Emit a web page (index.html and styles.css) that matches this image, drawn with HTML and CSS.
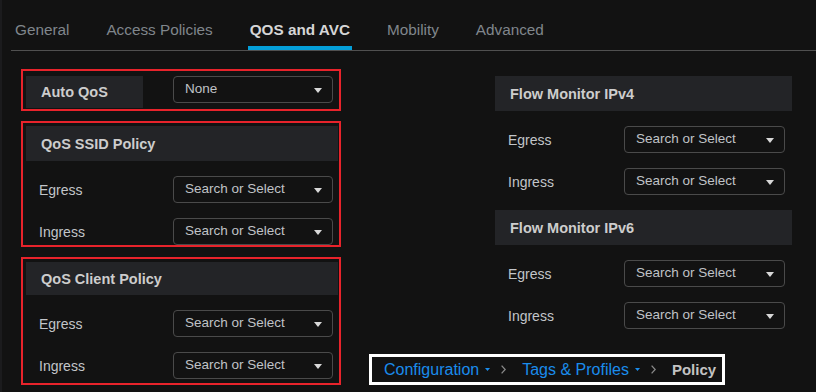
FILE: index.html
```html
<!DOCTYPE html>
<html lang="en">
<head>
  <meta charset="UTF-8">
  <title>Policy Profile - QOS and AVC</title>
  <link rel="stylesheet" href="styles.css">
</head>
<body>

  <div class="page">
    <nav class="tabs">
      <a class="tab">General</a>
      <a class="tab">Access Policies</a>
      <a class="tab active">QOS and AVC</a>
      <a class="tab">Mobility</a>
      <a class="tab">Advanced</a>
    </nav>

    <div class="content">
      <div class="col-left">
        <div class="mark mark-auto">
          <div class="auto-label">Auto QoS</div>
          <div class="select">
            <span>None</span>
            <svg class="arrow" width="8" height="5" viewBox="0 0 8 5"><path d="M0 0h8L4 5z"/></svg>
          </div>
        </div>

        <div class="mark mark-section">
          <div class="section-head">QoS SSID Policy</div>
          <div class="field-row">
            <span class="field-label">Egress</span>
            <div class="select">
              <span>Search or Select</span>
              <svg class="arrow" width="8" height="5" viewBox="0 0 8 5"><path d="M0 0h8L4 5z"/></svg>
            </div>
          </div>
          <div class="field-row">
            <span class="field-label">Ingress</span>
            <div class="select">
              <span>Search or Select</span>
              <svg class="arrow" width="8" height="5" viewBox="0 0 8 5"><path d="M0 0h8L4 5z"/></svg>
            </div>
          </div>
        </div>

        <div class="mark mark-section mark-client">
          <div class="section-head">QoS Client Policy</div>
          <div class="field-row">
            <span class="field-label">Egress</span>
            <div class="select">
              <span>Search or Select</span>
              <svg class="arrow" width="8" height="5" viewBox="0 0 8 5"><path d="M0 0h8L4 5z"/></svg>
            </div>
          </div>
          <div class="field-row">
            <span class="field-label">Ingress</span>
            <div class="select">
              <span>Search or Select</span>
              <svg class="arrow" width="8" height="5" viewBox="0 0 8 5"><path d="M0 0h8L4 5z"/></svg>
            </div>
          </div>
        </div>
      </div>

      <div class="col-right">
        <div class="monitor">
          <div class="monitor-group">
            <div class="section-head">Flow Monitor IPv4</div>
            <div class="field-row">
              <span class="field-label">Egress</span>
              <div class="select">
                <span>Search or Select</span>
                <svg class="arrow" width="8" height="5" viewBox="0 0 8 5"><path d="M0 0h8L4 5z"/></svg>
              </div>
            </div>
            <div class="field-row">
              <span class="field-label">Ingress</span>
              <div class="select">
                <span>Search or Select</span>
                <svg class="arrow" width="8" height="5" viewBox="0 0 8 5"><path d="M0 0h8L4 5z"/></svg>
              </div>
            </div>
          </div>

          <div class="monitor-group">
            <div class="section-head">Flow Monitor IPv6</div>
            <div class="field-row">
              <span class="field-label">Egress</span>
              <div class="select">
                <span>Search or Select</span>
                <svg class="arrow" width="8" height="5" viewBox="0 0 8 5"><path d="M0 0h8L4 5z"/></svg>
              </div>
            </div>
            <div class="field-row">
              <span class="field-label">Ingress</span>
              <div class="select">
                <span>Search or Select</span>
                <svg class="arrow" width="8" height="5" viewBox="0 0 8 5"><path d="M0 0h8L4 5z"/></svg>
              </div>
            </div>
          </div>
        </div>

        <div class="crumbs">
          <a class="crumb-link">Configuration</a>
          <svg class="caret" width="5" height="3" viewBox="0 0 5 3"><path d="M0 0h5L2.5 3z"/></svg>
          <svg class="chevron" width="5" height="9" viewBox="0 0 5 9"><path d="M0.6 0.6L4.2 4.5L0.6 8.4"/></svg>
          <a class="crumb-link">Tags &amp; Profiles</a>
          <svg class="caret" width="5" height="3" viewBox="0 0 5 3"><path d="M0 0h5L2.5 3z"/></svg>
          <svg class="chevron" width="5" height="9" viewBox="0 0 5 9"><path d="M0.6 0.6L4.2 4.5L0.6 8.4"/></svg>
          <span class="crumb-current">Policy</span>
        </div>
      </div>
    </div>
  </div>

</body>
</html>
```

FILE: styles.css
```css
body {
  margin: 0;
  background-color: #121212;
  font-family: "Liberation Sans", Arial, sans-serif;
  color: #c2c5c9;
}

.page {
  height: 392px;
  border-left: 2px solid #1b1b1d;
  box-sizing: border-box;
  overflow: hidden;
}

/* tabs */
.tabs {
  display: flex;
  gap: 33px;
  margin-left: 9px;
  padding-left: 2px;
  border-bottom: 1px solid #505050;
}

.tab {
  padding: 21px 2px 8px;
  border-bottom: 4px solid transparent;
  font-size: 15.3px;
  line-height: 17px;
  color: #80868c;
}

.tab.active {
  border-bottom-color: #049fd9;
  font-weight: bold;
  color: #d6d6d6;
}

/* two columns */
.content {
  display: grid;
  grid-template-columns: 320px 1fr;
  column-gap: 28px;
  padding: 18px 0 0 19px;
}

.mark {
  border: 2px solid #e8232b;
}

.mark-auto {
  display: flex;
  align-items: flex-start;
  padding: 5px 0 1px 3px;
}

.auto-label {
  width: 117px;
  height: 32px;
  padding-left: 15px;
  box-sizing: border-box;
  display: flex;
  align-items: center;
  background-color: #232427;
  font-size: 14.5px;
  font-weight: bold;
  color: #cdcdcd;
}

.mark-auto .select {
  margin-left: 30px;
}

.mark-section {
  margin-top: 10px;
  padding: 3px 1px 0 3px;
}

.mark-client {
  padding-bottom: 4px;
}

.mark-client .section-head {
  height: 33px;
}

.section-head {
  height: 35px;
  padding-left: 15px;
  display: flex;
  align-items: center;
  background-color: #232427;
  font-size: 14.5px;
  font-weight: bold;
  color: #cdcdcd;
}

.field-row {
  display: flex;
  align-items: center;
  height: 27px;
  margin-top: 15px;
}

.field-label {
  width: 147px;
  padding-left: 13px;
  box-sizing: border-box;
  font-size: 14px;
}

.select {
  width: 160px;
  height: 27px;
  box-sizing: border-box;
  display: flex;
  justify-content: space-between;
  align-items: center;
  padding: 0 10px 2px 11px;
  border: 1px solid #4a4a4a;
  border-radius: 4px;
  font-size: 13.5px;
  color: #c0c3c7;
}

.arrow {
  margin-top: 4px;
  fill: #d8d8d8;
}

/* right column */
.monitor {
  margin-left: 126px;
  padding-top: 7px;
  width: 297px;
}

.monitor-group + .monitor-group {
  margin-top: 15px;
}

.monitor .field-label {
  width: 129px;
}

.monitor .select {
  width: 161px;
}

/* breadcrumb */
.crumbs {
  display: flex;
  align-items: center;
  width: fit-content;
  height: 31px;
  box-sizing: border-box;
  margin-top: 25px;
  padding: 0 6px 0 12px;
  border: 3px solid #ffffff;
  font-size: 16px;
}

.crumb-link {
  color: #1a8cec;
}

.caret {
  margin-left: 6px;
  fill: #1a8cec;
}

.chevron {
  margin: 0 16px 0 11px;
  fill: none;
  stroke: #8a8a8a;
  stroke-width: 1.3;
}

.crumb-current {
  font-size: 15px;
  font-weight: bold;
  color: #c3c3c3;
}
```
